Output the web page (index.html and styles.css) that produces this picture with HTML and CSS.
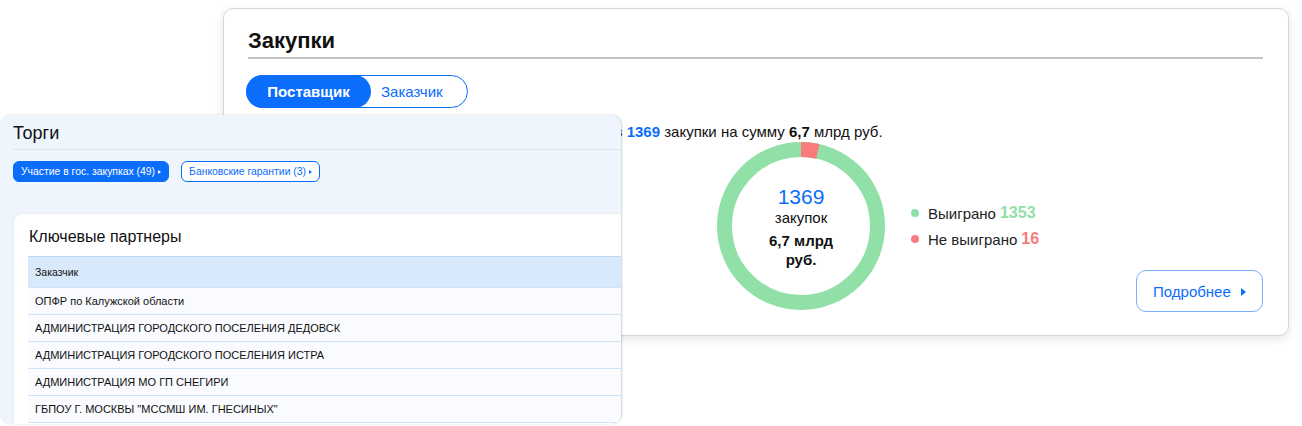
FILE: index.html
```html
<!DOCTYPE html>
<html lang="ru">
<head>
  <meta charset="UTF-8"/>
  <meta name="viewport" content="width=device-width, initial-scale=1.0"/>
  <title>Закупки и торги</title>
  <link rel="stylesheet" href="styles.css">
</head>
<body>
  <!-- карточка закупок -->
  <section class="card purchases">
    <h2 class="card-title">Закупки</h2>
    <div class="switch">
      <button class="switch-btn active">Поставщик</button>
      <button class="switch-btn">Заказчик</button>
    </div>
    <p class="summary">Организация за всё время приняла участие в <b class="blue">1369</b> закупки на сумму <b>6,7</b> млрд руб.</p>

    <div class="chart-row">
      <div class="donut">
        <svg width="168" height="168" viewBox="0 0 168 168">
          <circle cx="84" cy="84" r="76.5" fill="none" stroke="#90e0a8" stroke-width="15"/>
          <circle cx="84" cy="84" r="76.5" fill="none" stroke="#f97b7b" stroke-width="15"
                  stroke-dasharray="17 464" transform="rotate(-90 84 84)"/>
        </svg>
        <div class="donut-text">
          <div class="donut-num">1369</div>
          <div class="donut-label">закупок</div>
          <div class="donut-sum">6,7 млрд<br>руб.</div>
        </div>
      </div>
      <ul class="legend">
        <li><span class="dot green"></span>Выиграно <b class="green-t">1353</b></li>
        <li><span class="dot red"></span>Не выиграно <b class="red-t">16</b></li>
      </ul>
    </div>

    <div class="more-row">
      <button class="more">Подробнее <span class="caret"></span></button>
    </div>
  </section>

  <!-- торги -->
  <section class="card tenders">
    <h3 class="tenders-title">Торги</h3>
    <div class="pills">
      <span class="pill filled">Участие в гос. закупках (49) <span class="caret sm"></span></span>
      <span class="pill">Банковские гарантии (3) <span class="caret sm"></span></span>
    </div>

    <div class="partners">
      <h4>Ключевые партнеры</h4>
      <table>
        <thead><tr><th>Заказчик</th></tr></thead>
        <tbody>
          <tr><td>ОПФР по Калужской области</td></tr>
          <tr><td>АДМИНИСТРАЦИЯ ГОРОДСКОГО ПОСЕЛЕНИЯ ДЕДОВСК</td></tr>
          <tr><td>АДМИНИСТРАЦИЯ ГОРОДСКОГО ПОСЕЛЕНИЯ ИСТРА</td></tr>
          <tr><td>АДМИНИСТРАЦИЯ МО ГП СНЕГИРИ</td></tr>
          <tr><td>ГБПОУ Г. МОСКВЫ "МССМШ ИМ. ГНЕСИНЫХ"</td></tr>
        </tbody>
      </table>
    </div>
  </section>
</body>
</html>
```

FILE: styles.css
```css
body { margin:0; width:1302px; height:426px; overflow:hidden; position:relative; background:#fff; font-family:"Liberation Sans", Arial, sans-serif; color:#111; }
b { font-weight:bold; }
.blue { color:#0b6dfb; }

.card { position:absolute; box-sizing:border-box; }

/* Закупки */
.purchases { left:223px; top:8px; width:1066px; height:328px; padding:0 25px 0 24px; background:#fff; border:1px solid #d6d6d6; border-radius:10px; box-shadow:0 3px 10px rgba(0,0,0,.10); }
.card-title { margin:0; padding-top:19px; padding-bottom:3px; font-size:22px; line-height:26px; color:#111; border-bottom:2px solid #c4c4c4; }
.switch { display:inline-flex; margin-top:16px; margin-left:-2px; border:1px solid #0b6dfb; border-radius:17px; height:33px; box-sizing:border-box; }
.switch-btn { border:none; background:none; font-family:inherit; font-size:15px; color:#0b6dfb; padding:0 24px 0 10px; border-radius:17px; cursor:pointer; }
.switch-btn.active { background:#0b6dfb; color:#fff; font-weight:bold; width:125px; margin:-1px 0 -1px -1px; padding:0; }
.summary { margin:15px 0 0; padding-left:56px; font-size:15px; line-height:17px; white-space:nowrap; }

.chart-row { display:flex; align-items:center; margin-left:469px; margin-top:2px; }
.donut { position:relative; width:168px; height:168px; }
.donut svg { display:block; }
.donut-text { position:absolute; inset:0; display:flex; flex-direction:column; align-items:center; justify-content:center; text-align:center; padding-top:2px; }
.donut-num { font-size:21px; line-height:24px; color:#0b6dfb; }
.donut-label { font-size:15px; line-height:17px; }
.donut-sum { margin-top:5px; font-size:15px; line-height:19px; font-weight:bold; }

.legend { list-style:none; margin:0 0 0 26px; padding:0; font-size:15px; color:#222; }
.legend li { display:flex; align-items:center; height:26px; }
.dot { display:inline-block; width:8px; height:8px; border-radius:50%; margin-right:9px; }
.dot.green { background:#90e0a8; }
.dot.red { background:#f97b7b; }
.green-t { color:#90e0a8; margin-left:4px; font-size:16px; }
.red-t { color:#f97b7b; margin-left:4px; font-size:16px; }

.more-row { display:flex; justify-content:flex-end; margin-top:-40px; }
.more { width:127px; height:42px; border:1px solid #78b0ff; border-radius:10px; background:#fff; color:#0b6dfb; font-family:inherit; font-size:15px; cursor:pointer; }
.caret { display:inline-block; width:0; height:0; border-top:4px solid transparent; border-bottom:4px solid transparent; border-left:5px solid currentColor; margin-left:6px; vertical-align:1px; }
.caret.sm { border-top-width:2.5px; border-bottom-width:2.5px; border-left-width:3px; margin-left:3px; }

/* Торги */
.tenders { left:0; top:115px; width:621px; height:309px; background:#eef5fd; border-radius:10px; overflow:hidden; box-shadow:1px 0 2px rgba(0,0,0,.18); }
.tenders-title { margin:0 0 0 13px; padding-top:6px; height:28px; line-height:24px; font-size:18px; font-weight:normal; color:#111; border-bottom:1px solid #dfe5ec; }
.pills { display:flex; gap:12px; padding:11px 13px 0; height:41px; box-sizing:border-box; }
.pill { display:inline-flex; align-items:center; height:21px; box-sizing:border-box; padding:0 7px; border:1px solid #0b6dfb; border-radius:6px; font-size:10.4px; color:#0b6dfb; background:#fff; white-space:nowrap; }
.pill.filled { background:#0b6dfb; color:#fff; }

.partners { margin:23px 0 0 14px; height:230px; background:#fff; border-radius:8px 0 0 0; box-shadow:0 0 3px rgba(0,0,0,.08); padding-left:14px; }
.partners h4 { margin:0; padding:14px 0 0 1px; height:28px; line-height:17px; font-size:16px; font-weight:normal; color:#111; }
.partners table { width:100%; border-collapse:collapse; font-size:11px; }
.partners th { height:30px; padding:0 7px; text-align:left; font-weight:normal; font-size:10.5px; background:#d7e9fa; border-top:1px solid #bcd9f5; border-bottom:1px solid #cfe3f7; }
.partners td { height:26px; padding:0 7px; background:#f9fbfe; border-bottom:1px solid #cde4fa; }
```
